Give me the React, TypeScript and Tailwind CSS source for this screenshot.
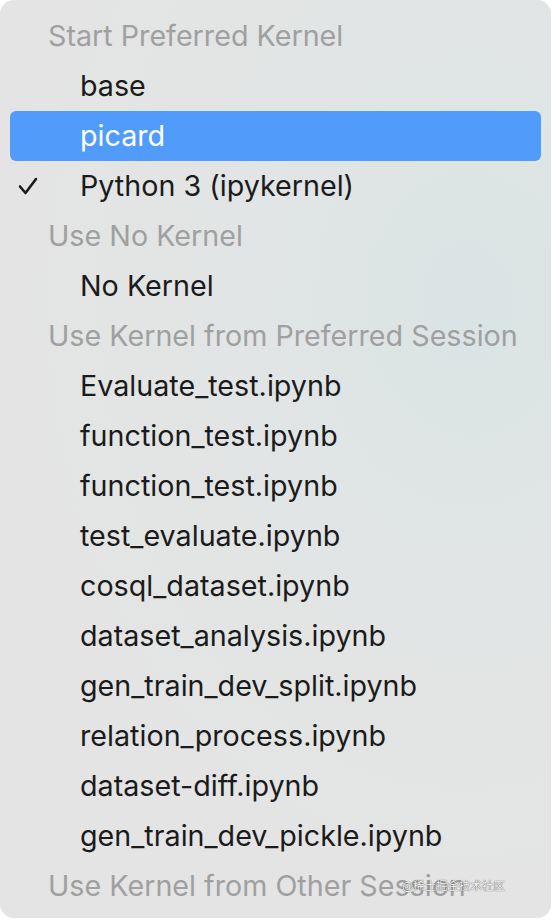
import React from 'react';

type Row =
  | { kind: 'header'; label: string }
  | { kind: 'item'; label: string; checked?: boolean; active?: boolean };

const rows: Row[] = [
  { kind: 'header', label: 'Start Preferred Kernel' },
  { kind: 'item', label: 'base' },
  { kind: 'item', label: 'picard', active: true },
  { kind: 'item', label: 'Python 3 (ipykernel)', checked: true },
  { kind: 'header', label: 'Use No Kernel' },
  { kind: 'item', label: 'No Kernel' },
  { kind: 'header', label: 'Use Kernel from Preferred Session' },
  { kind: 'item', label: 'Evaluate_test.ipynb' },
  { kind: 'item', label: 'function_test.ipynb' },
  { kind: 'item', label: 'function_test.ipynb' },
  { kind: 'item', label: 'test_evaluate.ipynb' },
  { kind: 'item', label: 'cosql_dataset.ipynb' },
  { kind: 'item', label: 'dataset_analysis.ipynb' },
  { kind: 'item', label: 'gen_train_dev_split.ipynb' },
  { kind: 'item', label: 'relation_process.ipynb' },
  { kind: 'item', label: 'dataset-diff.ipynb' },
  { kind: 'item', label: 'gen_train_dev_pickle.ipynb' },
  { kind: 'header', label: 'Use Kernel from Other Session' },
];

const Check = () => (
  <svg viewBox="0 0 20 18" className="w-[20px] h-[18px]" fill="none">
    <path d="M2 9.5 L7.5 16 L18 2" stroke="#1c1c1c" strokeWidth="2.6" strokeLinecap="round" strokeLinejoin="round" />
  </svg>
);

const MenuRow = ({ row }: { row: Row }) => {
  if (row.kind === 'header') {
    return (
      <div className="h-[50px] flex items-center pl-[48px] text-[#a0a0a0] whitespace-nowrap">
        {row.label}
      </div>
    );
  }
  return (
    <div
      className={`h-[50px] mx-[10px] rounded-[6px] flex items-center whitespace-nowrap ${
        row.active ? 'bg-[#519bfa] text-white' : 'text-[#1b1b1b]'
      }`}
    >
      <div className="w-[70px] flex justify-start pl-[8px]">{row.checked && <Check />}</div>
      {row.label}
    </div>
  );
};

export default function App() {
  return (
    <div className="w-[552px] h-[920px] bg-white">
      <div
        className="w-[551px] h-[918px] rounded-[14px] pt-[11px] bg-[#e4e4e4] bg-[radial-gradient(ellipse_at_85%_33%,#dae4e4_0%,#e2e5e5_35%,#e4e4e4_70%)] text-[28.7px] leading-none relative overflow-hidden"
        style={{ fontFamily: 'Inter, "Noto Sans", sans-serif' }}
      >
        {rows.map((row, i) => (
          <MenuRow key={i} row={row} />
        ))}
        <div
          className="absolute right-[46px] bottom-[26px] text-[11.5px] text-[#f5f5f5] leading-none"
          style={{
            fontFamily: 'Inter, "Noto Sans CJK SC", sans-serif',
            textShadow: '0 0 1px rgba(0,0,0,0.6), 0 0 1px rgba(0,0,0,0.4)',
          }}
        >
          @稀土掘金技术社区
        </div>
      </div>
    </div>
  );
}
